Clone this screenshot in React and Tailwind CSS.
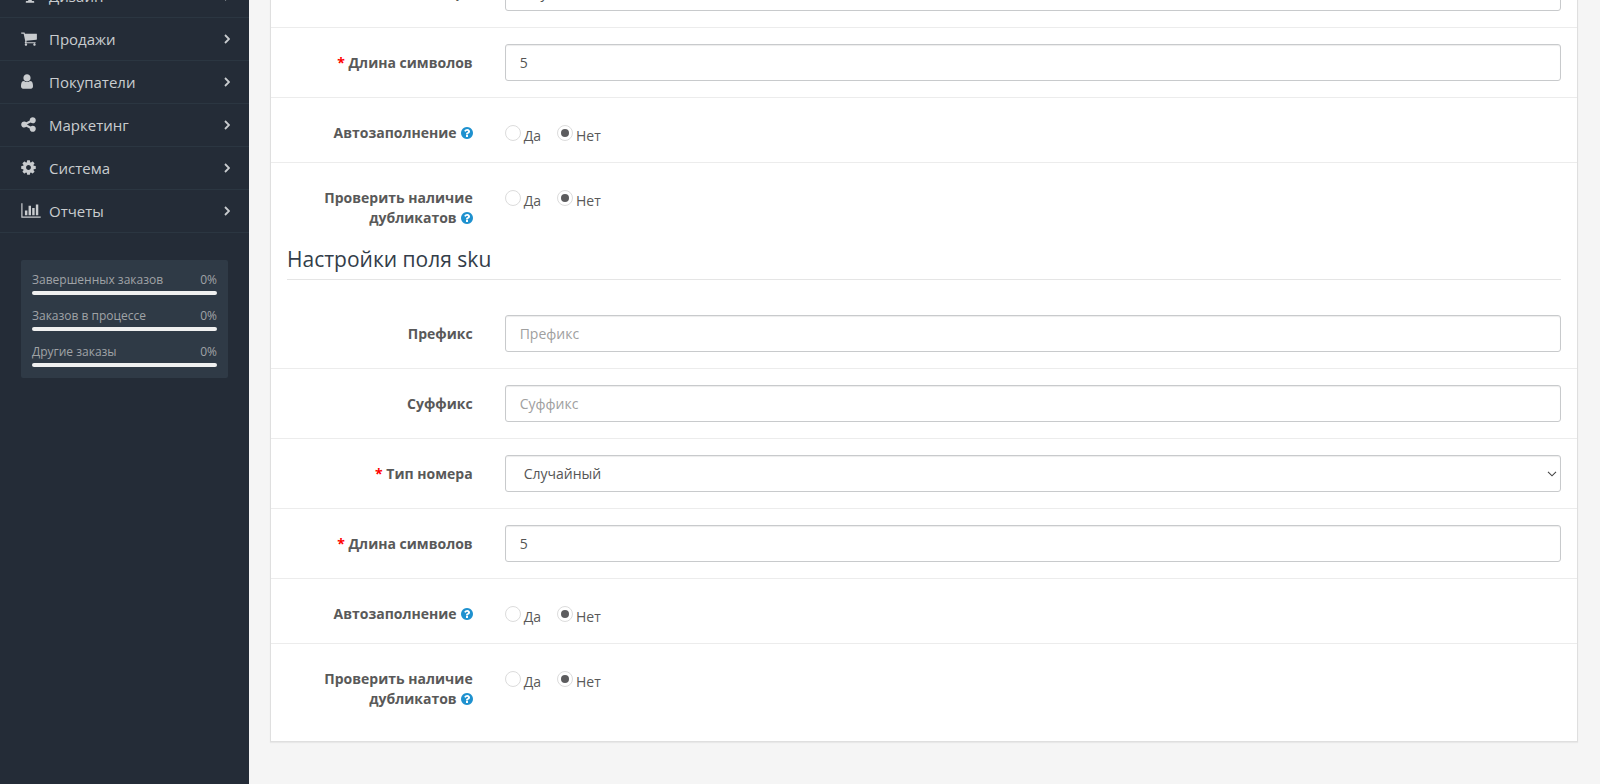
const menu = [
  {
    title: 'Дизайн',
    viewBox: '0 0 1920 1792',
    width: 'w-[18px]',
    path: 'M1792 992v-832q0-13-9.500-22.500t-22.500-9.500h-1600q-13 0-22.500 9.500t-9.500 22.500v832q0 13 9.500 22.500t22.500 9.500h1600q13 0 22.500-9.500t9.500-22.500zm128-832v1008q0 66-47 113t-113 47h-608v160h192q64 0 64 64v112h-896v-112q0-64 64-64h192v-160h-608q-66 0-113-47t-47-113v-1008q0-66 47-113t113-47h1600q66 0 113 47t47 113z',
  },
  {
    title: 'Продажи',
    viewBox: '64 0 1664 1792',
    width: 'w-4',
    path: 'M704 1536q0 52-38 90t-90 38-90-38-38-90 38-90 90-38 90 38 38 90zm896 0q0 52-38 90t-90 38-90-38-38-90 38-90 90-38 90 38 38 90zm128-1088v512q0 24-16.500 42.500t-40.500 21.500l-1044 122q13 60 13 70 0 16-24 64h920q26 0 45 19t19 45-19 45-45 19h-1024q-26 0-45-19t-19-45q0-11 8-31.500t16-36 21.500-40 15.500-29.500l-177-823h-204q-26 0-45-19t-19-45 19-45 45-19h256q16 0 28.500 6.500t19.500 15.500 13 24.500 8 26 5.500 29.500 4.500 26h1201q26 0 45 19t19 45z',
  },
  {
    title: 'Покупатели',
    viewBox: '256 0 1280 1792',
    width: 'w-3',
    path: 'M1536 1399q0 109-62.500 187t-150.500 78h-854q-88 0-150.500-78t-62.500-187q0-85 8.500-160.500t31.500-152 58.500-131 94-89 134.500-34.500q131 128 313 128t313-128q76 0 134.500 34.500t94 89 58.500 131 31.500 152 8.500 160.500zm-256-887q0 159-112.500 271.500t-271.500 112.500-271.500-112.500-112.500-271.500 112.500-271.500 271.500-112.500 271.500 112.500 112.500 271.500z',
  },
  {
    title: 'Маркетинг',
    viewBox: '128 0 1536 1792',
    width: 'w-[15px]',
    path: 'M1344 1024q133 0 226.500 93.500t93.500 226.500-93.500 226.500-226.500 93.500-226.500-93.500-93.500-226.500q0-12 2-34l-360-180q-92 86-218 86-133 0-226.500-93.500t-93.500-226.500 93.500-226.500 226.500-93.500q126 0 218 86l360-180q-2-22-2-34 0-133 93.500-226.500t226.500-93.500 226.500 93.500 93.500 226.500-93.500 226.500-226.500 93.500q-126 0-218-86l-360 180q2 22 2 34t-2 34l360 180q92-86 218-86z',
  },
  {
    title: 'Система',
    viewBox: '128 0 1536 1792',
    width: 'w-[15px]',
    path: 'M1152 896q0-106-75-181t-181-75-181 75-75 181 75 181 181 75 181-75 75-181zm512-109v222q0 12-8 23t-20 13l-185 28q-19 54-39 91 35 50 107 138 10 12 10 25t-9 23q-27 37-99 108t-94 71q-12 0-26-9l-138-108q-44 23-91 38-16 136-29 186-7 28-36 28h-222q-14 0-24.500-8.500t-11.500-21.500l-28-184q-49-16-90-37l-141 107q-10 9-25 9-14 0-25-11-126-114-165-168-7-10-7-23 0-12 8-23 15-21 51-66.500t54-70.500q-27-50-41-99l-183-27q-13-2-21-12.500t-8-23.500v-222q0-12 8-23t19-13l186-28q14-46 39-92-40-57-107-138-10-12-10-24 0-10 9-23 26-36 98.500-107.500t94.500-71.500q13 0 26 10l138 107q44-23 91-38 16-136 29-186 7-28 36-28h222q14 0 24.500 8.500t11.500 21.500l28 184q49 16 90 37l142-107q9-9 24-9 13 0 25 10 129 119 165 170 7 8 7 22 0 12-8 23-15 21-51 66.500t-54 70.500q26 50 41 98l183 28q13 2 21 12.500t8 23.500z',
  },
  {
    title: 'Отчеты',
    viewBox: '0 0 2048 1792',
    width: 'w-5',
    path: 'M640 896v512h-256v-512h256zm384-512v1024h-256v-1024h256zm1024 1152v128h-2048v-1536h128v1408h1920zm-640-896v768h-256v-768h256zm384-384v1152h-256v-1152h256z',
  },
];

const stats = ['Завершенных заказов', 'Заказов в процессе', 'Другие заказы'];

const control =
  'block w-full h-[37px] rounded-[3px] border border-[#c8cacc] bg-white text-sm text-[#555] shadow-[inset_0_1px_1px_rgba(0,0,0,0.075)] outline-none focus:border-[#66afe9]';

function Sidebar() {
  return (
    <aside className="w-[249px] shrink-0 bg-[#242c37]">
      <nav className="-mt-[25px]">
        <ul>
          {menu.map((item) => (
            <li key={item.title} className="border-b border-[#2b3641]">
              <a href="#" className="flex items-center h-[42px] pl-[21px] pr-[19px] pb-px text-[15px] leading-5 text-[#c9cccf]">
                <span className="w-7 shrink-0">
                  <svg viewBox={item.viewBox} className={`${item.width} h-[17px]`} fill="currentColor" aria-hidden="true">
                    <path d={item.path} />
                  </svg>
                </span>
                <span className="flex-1">{item.title}</span>
                <svg viewBox="0 0 6 10" className="w-[6px] h-[10px]" fill="none" stroke="currentColor" strokeWidth="1.8" aria-hidden="true">
                  <path d="M1 1l4 4-4 4" />
                </svg>
              </a>
            </li>
          ))}
        </ul>
      </nav>
      <ul className="mt-[27px] mx-[21px] px-[11px] pt-[10px] rounded-[2px] bg-[#2f3a46]">
        {stats.map((name) => (
          <li key={name} className="pb-[11px]">
            <div className="flex justify-between pb-[2px] text-xs leading-[19px] text-[#a0a3a6]">
              <span>{name}</span>
              <span>0%</span>
            </div>
            <div className="h-1 rounded-[2px] bg-[#f0f0f0]" />
          </li>
        ))}
      </ul>
    </aside>
  );
}

function HelpIcon() {
  return (
    <svg viewBox="128 0 1536 1792" className="inline-block align-[-2px] ml-1 w-3 h-[14px] text-[#1e91cf]" fill="currentColor" aria-hidden="true">
      <path d="M1024 1376v-192q0-14-9-23t-23-9h-192q-14 0-23 9t-9 23v192q0 14 9 23t23 9h192q14 0 23-9t9-23zm256-672q0-88-55.500-163t-138.500-116-170-41q-243 0-371 213-15 24 8 42l132 100q7 6 19 6 16 0 25-12 53-68 86-92 34-24 86-24 48 0 85.500 26t37.500 59q0 38-20 61t-68 45q-63 28-115.500 86.500t-52.500 125.500v36q0 14 9 23t23 9h192q14 0 23-9t9-23q0-19 21.500-49.500t54.500-49.500q32-18 49-28.500t46-35 44.500-48 28-60.500 12.500-81zm384 192q0 209-103 385.500t-279.500 279.500-385.500 103-385.500-103-279.500-279.500-103-385.500 103-385.500 279.500-279.500 385.500-103 385.500 103 279.500 279.500 103 385.500z" />
    </svg>
  );
}

function Row({ children }) {
  return <div className="flex py-4 border-t border-[#ececec] first:border-t-0">{children}</div>;
}

const labelCell = 'w-1/6 shrink-0 px-4 pt-[9px] text-right text-sm leading-5 font-bold text-[#595959]';

function Field({ id, label, required, children }) {
  return (
    <Row>
      <label htmlFor={id} className={labelCell}>
        {required && <span className="text-[#f00]">* </span>}
        {label}
      </label>
      <div className="flex-1 px-4">{children}</div>
    </Row>
  );
}

function NumberType({ id }) {
  return (
    <Field id={id} label="Тип номера" required>
      <div className="relative">
        <select id={id} className={`${control} appearance-none pl-[18px] pr-6`}>
          <option>Случайный</option>
        </select>
        <svg viewBox="0 0 10 6" className="absolute right-1 top-4 w-[10px] h-[6px] pointer-events-none" fill="none" stroke="#444" strokeWidth="1.1" aria-hidden="true">
          <path d="M1 .8l4 4 4-4" />
        </svg>
      </div>
    </Field>
  );
}

function TextField({ id, label, required, value, placeholder }) {
  return (
    <Field id={id} label={label} required={required}>
      <input id={id} type="text" defaultValue={value} placeholder={placeholder} className={`${control} px-[14px] placeholder:text-[#a0a0a0]`} />
    </Field>
  );
}

function YesNo({ name, label }) {
  return (
    <Row>
      <div id={`${name}-label`} className={labelCell}>
        {label}
        <HelpIcon />
      </div>
      <div role="radiogroup" aria-labelledby={`${name}-label`} className="flex-1 flex items-start gap-4 px-4 pt-[11px] text-sm leading-5 text-[#595959]">
        {['Да', 'Нет'].map((text) => (
          <label key={text} className="flex items-start gap-[3px] h-[21px]">
            <input
              type="radio"
              name={name}
              defaultChecked={text === 'Нет'}
              className="appearance-none grid place-content-center size-4 rounded-full border border-[#dcdcdc] bg-white checked:before:block checked:before:size-2 checked:before:rounded-full checked:before:bg-[#5c5c5e]"
            />
            <span className="pt-px">{text}</span>
          </label>
        ))}
      </div>
    </Row>
  );
}

export default function App() {
  return (
    <div className="flex h-screen overflow-hidden bg-[#f5f5f5] font-['Open_Sans',sans-serif]">
      <Sidebar />
      <main className="flex-1 min-w-0 pl-[21px] pr-[22px]">
        <form className="-mt-[43px] pb-4 bg-white border border-[#dfdfdf] shadow-[0_1px_1px_rgba(0,0,0,0.05)]">
          <section>
            <NumberType id="model-type" />
            <TextField id="model-length" label="Длина символов" required value="5" />
            <YesNo name="model-autofill" label="Автозаполнение" />
            <YesNo name="model-duplicates" label="Проверить наличие дубликатов" />
          </section>
          <h2 className="mx-4 mb-[19px] pb-[5px] border-b border-[#e5e5e5] text-[21px] leading-[30px] text-[#333d49]">Настройки поля sku</h2>
          <section>
            <TextField id="sku-prefix" label="Префикс" placeholder="Префикс" />
            <TextField id="sku-suffix" label="Суффикс" placeholder="Суффикс" />
            <NumberType id="sku-type" />
            <TextField id="sku-length" label="Длина символов" required value="5" />
            <YesNo name="sku-autofill" label="Автозаполнение" />
            <YesNo name="sku-duplicates" label="Проверить наличие дубликатов" />
          </section>
        </form>
      </main>
    </div>
  );
}
